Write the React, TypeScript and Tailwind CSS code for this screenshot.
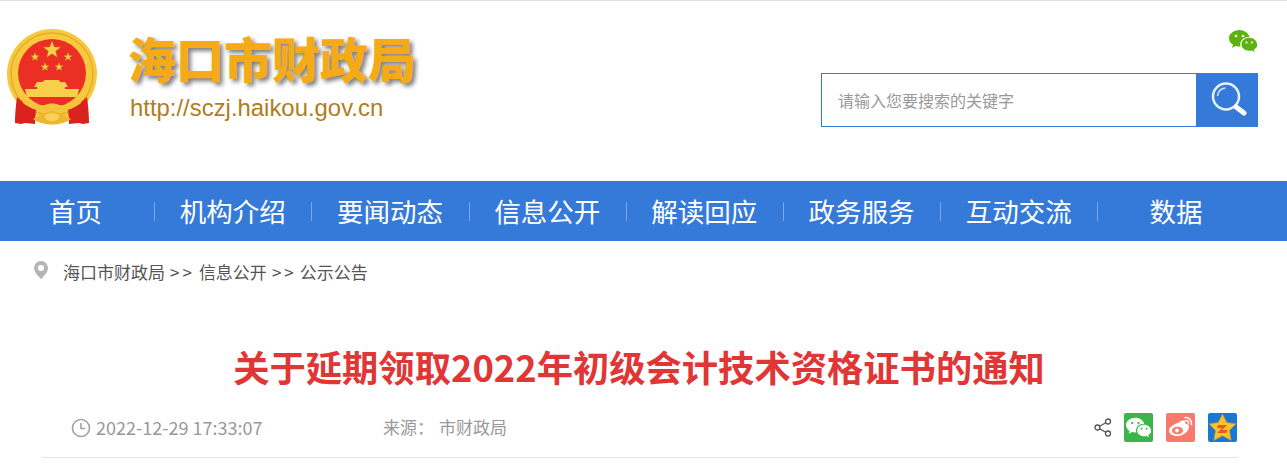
import { Fragment } from 'react'

const NAV_ITEMS = ['首页', '机构介绍', '要闻动态', '信息公开', '解读回应', '政务服务', '互动交流', '数据']

function Star({ cx, cy, r, fill = '#f8cf4a' }: { cx: number; cy: number; r: number; fill?: string }) {
  const pts = Array.from({ length: 10 }, (_, i) => {
    const a = -Math.PI / 2 + (i * Math.PI) / 5
    const rad = i % 2 === 0 ? r : r * 0.42
    return `${(cx + rad * Math.cos(a)).toFixed(2)},${(cy + rad * Math.sin(a)).toFixed(2)}`
  }).join(' ')
  return <polygon points={pts} fill={fill} stroke="#b98a22" strokeWidth="0.4" />
}

function Emblem() {
  return (
    <svg width="90" height="96" viewBox="0 0 90 96" className="shrink-0 blur-[0.4px]">
      <circle cx="45" cy="45" r="45" fill="#f6c93f" />
      <circle cx="45" cy="45" r="41" fill="none" stroke="#e4ad2e" strokeWidth="1.500" />
      <circle cx="45" cy="44" r="34" fill="#ec2f24" />
      <Star cx={45} cy={21} r={9} />
      <Star cx={28} cy={28} r={4.4} />
      <Star cx={61} cy={28} r={4.4} />
      <Star cx={38} cy={38} r={4.4} />
      <Star cx={52} cy={38} r={4.4} />
      {/* gate */}
      <path d="M38 51h14l1 2h5l3 5h-3v2H30v-2h-3l3-5h5z" fill="#f8cf4a" />
      <path d="M18 60h54l-2 8H20z" fill="#f8cf4a" />
      {/* ribbons */}
      <path d="M10 68c5 5 11 9 19 12l-1 15-10-1-4 1-6-1c0-9 1-19 2-26zM80 68c-5 5-11 9-19 12l1 15 10-1 4 1 6-1c0-9-1-19-2-26z" fill="#d9231c" />
      <path d="M14 66c7 8 16 11 24 10 3-2 11-2 14 0 8 1 17-2 24-10l-2 8c-6 5-14 8-22 8-3 2-11 2-14 0-8 0-16-3-22-8z" fill="#f3c53f" />
      {/* wheel and wheat */}
      <path d="M26 90c4-3 10-6 19-8 9 2 15 5 19 8-6 4-12 5.500-19 5.500S32 94 26 90z" fill="#efb62d" />
      <ellipse cx="45" cy="88" rx="7" ry="4" fill="#f8d25a" />
    </svg>
  )
}

function WechatGlyph({ className, fill, eye }: { className: string; fill: string; eye: string }) {
  return (
    <svg viewBox="0 0 28 22" className={className}>
      <path d="M10.500 0C4.700 0 0 3.700 0 8.300c0 2.700 1.500 4.900 4 6.500L3 18l3.700-2c1.200.3 2.400.6 3.800.6h1c-.2-.7-.3-1.400-.3-2.100 0-4.200 3.700-7.600 8.500-7.600h.8C19.400 3 15.300 0 10.500 0z" fill={fill} />
      <circle cx="7" cy="6" r="1.300" fill={eye} />
      <circle cx="14" cy="6" r="1.300" fill={eye} />
      <path d="M28 14.300c0-3.600-3.600-6.500-7.700-6.500-4.400 0-7.800 2.900-7.800 6.500s3.400 6.500 7.800 6.500c.9 0 1.800-.2 2.700-.4l2.700 1.500-.7-2.500c2.200-1.300 4-3.500 4-5.100z" fill={fill} />
      <circle cx="17.500" cy="12.500" r="1.100" fill={eye} />
      <circle cx="23" cy="12.500" r="1.100" fill={eye} />
    </svg>
  )
}

function SearchGlyph() {
  return (
    <svg width="36" height="38" viewBox="0 0 36 38" fill="none" className="ml-[3px]">
      <circle cx="15" cy="15.500" r="13" stroke="#eaf2fb" strokeWidth="2.400" />
      <path d="M6.500 15c.5-4.500 3.500-7.500 8-8" stroke="#cfe0f6" strokeWidth="1.600" />
      <path d="M25 26l8 6" stroke="#ffffff" strokeWidth="5" strokeLinecap="round" />
    </svg>
  )
}

function ShareIcons() {
  return (
    <div className="flex items-center">
      <svg width="18" height="19" viewBox="0 0 18 19" fill="none" stroke="#555" strokeWidth="1.300" className="mr-[12px]">
        <circle cx="3.500" cy="9.500" r="2.500" />
        <circle cx="14" cy="3.500" r="2.500" />
        <circle cx="14" cy="15.500" r="2.500" />
        <path d="M5.700 8.300l6-3.500M5.700 10.700l6 3.500" />
      </svg>
      <div className="w-[29px] h-[29px] rounded-[2px] bg-[#3cb44a] flex items-center justify-center mr-[13px]">
        <WechatGlyph className="w-[25px] h-[21px]" fill="#ffffff" eye="#3cb44a" />
      </div>
      <div className="w-[29px] h-[29px] rounded-[2px] bg-[#f9796c] flex items-center justify-center mr-[13px]">
        <svg width="25" height="22" viewBox="0 0 25 22" fill="none">
          <path d="M10 7c4-3.500 7-3 7.500-1 .2 1-.2 2-.2 2 2.200-.4 3.700.6 3.700 2.500C21 15 15.500 20 9 20 4 20 1 17.500 1 14.500 1 12 5 8 10 7z" fill="#ffffff" />
          <ellipse cx="9.500" cy="14.500" rx="5.500" ry="3.800" fill="#f9796c" />
          <circle cx="9" cy="14.500" r="2" fill="#ffffff" />
          <path d="M17 1.500c3.500-.5 7 2.500 6.500 7M17.500 4.500c2-.2 3.300 1.300 3 3.200" stroke="#ffffff" strokeWidth="1.500" strokeLinecap="round" />
        </svg>
      </div>
      <div className="w-[29px] h-[29px] rounded-[2px] bg-[#1878d6] flex items-center justify-center">
        <svg width="29" height="29" viewBox="0 0 29 29">
          <polygon points="14.500,1 18.800,9.500 28,10.800 21.500,17.500 23.200,27.500 14.500,22.800 5.800,27.500 7.500,17.500 1,10.800 10.200,9.500" fill="#f9c22e" stroke="#d08a1c" strokeWidth="0.600" />
          <path d="M10 12h9l-5 5h5.500l-1.500 3h-9l5-5h-5z" fill="#e8591f" />
        </svg>
      </div>
    </div>
  )
}

export default function App() {
  return (
    <div className="w-[1287px] h-[465px] overflow-hidden bg-white font-['Noto_Sans_CJK_SC',sans-serif]">
      {/* Header */}
      <header className="h-[181px] border-t border-[#dddddd] flex justify-between pl-[7px] pr-[29px] pt-[28px]">
        <div className="flex">
          <Emblem />
          <div className="ml-[31px] -mt-[7px]">
            <h1 className="text-[48px] leading-[70px] font-black text-[#f5ab18] [text-shadow:3px_3px_4px_rgba(40,40,40,0.6)]">
              海口市财政局
            </h1>
            <p className="font-['Liberation_Sans',sans-serif] text-[23.900px] leading-[28px] text-[#b07d1b] mt-[2px] ml-[2px]">
              http://sczj.haikou.gov.cn
            </p>
          </div>
        </div>
        <div className="flex flex-col items-end">
          <WechatGlyph className="w-[28px] h-[22px] mt-[1px] mr-[1px]" fill="#5cb20f" eye="#ffffff" />
          <div className="flex mt-[21px] h-[54px] w-[437px]">
            <div className="flex-1 border border-[#367ad9] flex items-center pl-[16px] text-[16px] text-[#999999]">
              请输入您要搜索的关键字
            </div>
            <div className="w-[61px] bg-[#367ad9] flex items-center justify-center">
              <SearchGlyph />
            </div>
          </div>
        </div>
      </header>

      {/* Nav */}
      <nav className="h-[60px] bg-[#367ad9] flex items-center -ml-[3px]">
        {NAV_ITEMS.map((item, i) => (
          <Fragment key={item}>
            <a className="w-[157.200px] shrink-0 flex items-center justify-center text-[26.500px] leading-[38px] text-white">
              {item}
            </a>
            {i < NAV_ITEMS.length - 1 && <span className="w-px h-[19px] -mr-px bg-[#7fa9e6]" />}
          </Fragment>
        ))}
      </nav>

      {/* Breadcrumb */}
      <div className="flex items-center h-[62px] pl-[34px] text-[17px] text-[#555555]">
        <svg width="14" height="18" viewBox="0 0 14 18" className="mr-[15px] -mt-[5px]">
          <path d="M7 0a7 7 0 0 0-7 7c0 4.500 5 9 7 11 2-2 7-6.500 7-11a7 7 0 0 0-7-7zm0 10a3 3 0 1 1 0-6 3 3 0 0 1 0 6z" fill="#b5b5b5" />
        </svg>
        <span>海口市财政局</span>
        <span className="ml-[5px] mr-[4px] tracking-[3px]">&gt;&gt;</span>
        <span>信息公开</span>
        <span className="ml-[5px] mr-[3px] tracking-[3px]">&gt;&gt;</span>
        <span>公示公告</span>
      </div>

      {/* Article head */}
      <div className="mx-[42px] w-[1196px]">
        <h2 className="text-center text-[36.300px] leading-[52px] font-bold text-[#e03636] mt-[37px] -ml-[2px]">
          关于延期领取2022年初级会计技术资格证书的通知
        </h2>
        <div className="flex items-center justify-between h-[61px] border-b border-[#e5e5e5] pl-[29px] pr-px text-[#999999] mt-[5px]">
          <div className="flex items-center text-[17px]">
            <svg width="20" height="20" viewBox="0 0 20 20" fill="none" stroke="#a3a3a3" strokeWidth="1.600" className="mr-[5px] mt-[2px]">
              <circle cx="10" cy="10" r="8.500" />
              <path d="M10 5v5.500h4" />
            </svg>
            <span className="w-[287px] text-[18px]">2022-12-29 17:33:07</span>
            <span>来源：</span>
            <span className="ml-[5px]">市财政局</span>
          </div>
          <ShareIcons />
        </div>
      </div>
    </div>
  )
}
